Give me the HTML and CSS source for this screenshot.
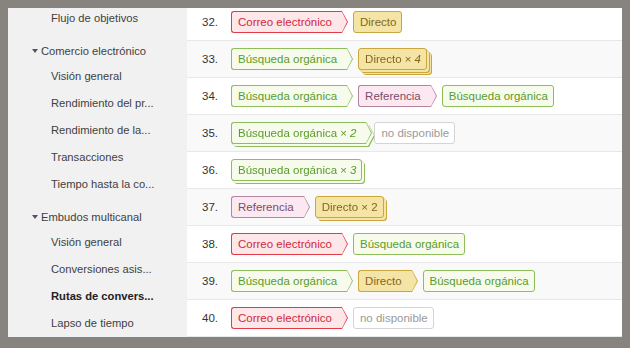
FILE: index.html
```html
<!DOCTYPE html>
<html lang="es">
<head>
    <meta charset="UTF-8">
    <meta name="viewport" content="width=device-width, initial-scale=1.0">
    <title>Rutas de conversión principales</title>
    <link rel="stylesheet" href="styles.css">
</head>
<body>
    <div class="panel">
        <div class="sidebar">
            <div class="nav-item first">Flujo de objetivos</div>

            <div class="nav-group"><span class="caret"></span>Comercio electrónico</div>
            <div class="nav-item">Visión general</div>
            <div class="nav-item">Rendimiento del pr...</div>
            <div class="nav-item">Rendimiento de la...</div>
            <div class="nav-item">Transacciones</div>
            <div class="nav-item">Tiempo hasta la co...</div>

            <div class="nav-group"><span class="caret"></span>Embudos multicanal</div>
            <div class="nav-item">Visión general</div>
            <div class="nav-item">Conversiones asis...</div>
            <div class="nav-item active">Rutas de convers...</div>
            <div class="nav-item">Lapso de tiempo</div>
        </div>

        <div class="main">
            <div class="paths">
                <div class="row">
                    <span class="num">32.</span>
                    <div class="path">
                        <span class="badge red arrow">Correo electrónico</span>
                        <span class="badge yellow">Directo</span>
                    </div>
                </div>
                <div class="row odd">
                    <span class="num">33.</span>
                    <div class="path">
                        <span class="badge green arrow">Búsqueda orgánica</span>
                        <span class="badge yellow stack-2">Directo <i>× 4</i></span>
                    </div>
                </div>
                <div class="row">
                    <span class="num">34.</span>
                    <div class="path">
                        <span class="badge green arrow">Búsqueda orgánica</span>
                        <span class="badge pink arrow">Referencia</span>
                        <span class="badge green">Búsqueda orgánica</span>
                    </div>
                </div>
                <div class="row odd">
                    <span class="num">35.</span>
                    <div class="path">
                        <span class="badge green arrow stack">Búsqueda orgánica <i>× 2</i></span>
                        <span class="badge gray">no disponible</span>
                    </div>
                </div>
                <div class="row">
                    <span class="num">36.</span>
                    <div class="path">
                        <span class="badge green stack">Búsqueda orgánica <i>× 3</i></span>
                    </div>
                </div>
                <div class="row odd">
                    <span class="num">37.</span>
                    <div class="path">
                        <span class="badge pink arrow">Referencia</span>
                        <span class="badge yellow stack">Directo × 2</span>
                    </div>
                </div>
                <div class="row">
                    <span class="num">38.</span>
                    <div class="path">
                        <span class="badge red arrow">Correo electrónico</span>
                        <span class="badge green">Búsqueda orgánica</span>
                    </div>
                </div>
                <div class="row odd">
                    <span class="num">39.</span>
                    <div class="path">
                        <span class="badge green arrow">Búsqueda orgánica</span>
                        <span class="badge yellow arrow">Directo</span>
                        <span class="badge green">Búsqueda orgánica</span>
                    </div>
                </div>
                <div class="row">
                    <span class="num">40.</span>
                    <div class="path">
                        <span class="badge red arrow">Correo electrónico</span>
                        <span class="badge gray">no disponible</span>
                    </div>
                </div>
            </div>
        </div>
    </div>
</body>
</html>
```

FILE: styles.css
```css
/* Frame */
html, body {
    height: 100%;
}

body {
    margin: 0;
    padding: 8px 8px 11px 8px;
    box-sizing: border-box;
    background-color: #87837e;
    font-family: "Liberation Sans", Arial, sans-serif;
    font-size: 11px;
    color: #333;
}

.panel {
    display: flex;
    height: 100%;
    overflow: hidden;
    background-color: #fff;
}

/* Sidebar */
.sidebar {
    width: 179px;
    flex-shrink: 0;
    background-color: #f1f1f1;
    color: #3f3f3f;
    font-size: 11.2px;
}

.nav-item {
    height: 27px;
    line-height: 27px;
    padding-left: 43px;
    white-space: nowrap;
}

.nav-item.first {
    margin-top: -3px;
}

.nav-item.active {
    font-weight: bold;
    color: #222;
}

.nav-group {
    display: flex;
    align-items: center;
    height: 25px;
    margin-top: 6px;
    padding-left: 24px;
    white-space: nowrap;
}

.caret {
    width: 0;
    height: 0;
    border-left: 3px solid transparent;
    border-right: 3px solid transparent;
    border-top: 4px solid #555;
    margin-right: 3px;
}

/* Path rows */
.main {
    flex: 1;
    overflow: hidden;
}

.paths {
    margin-top: -4px;
}

.row {
    display: flex;
    align-items: center;
    height: 36px;
    border-bottom: 1px solid #e8e8e8;
}

.row.odd {
    background-color: #f9f9f9;
}

.num {
    width: 31px;
    margin-right: 13px;
    text-align: right;
    font-size: 11.5px;
    color: #333;
}

.path {
    display: flex;
    align-items: center;
    gap: 5px;
}

/* Channel badges */
.badge {
    position: relative;
    display: inline-flex;
    align-items: center;
    height: 22px;
    box-sizing: border-box;
    padding: 0 5px 0 6px;
    border: 1px solid;
    border-radius: 3px;
    font-size: 11.5px;
    white-space: nowrap;
    --bg: #fff;
    --line: #ccc;
    background-color: var(--bg);
    border-color: var(--line);
}

.badge i {
    margin-left: 3px;
}

.badge.arrow {
    padding-right: 10px;
    margin-right: 6px;
    border-right: none;
    border-radius: 3px 0 0 3px;
}

.badge.arrow::before,
.badge.arrow::after {
    content: "";
    position: absolute;
    left: 100%;
    width: 0;
    height: 0;
}

.badge.arrow::before {
    top: -1px;
    border-top: 11px solid transparent;
    border-bottom: 11px solid transparent;
    border-left: 6px solid var(--line);
}

.badge.arrow::after {
    top: 0;
    border-top: 10px solid transparent;
    border-bottom: 10px solid transparent;
    border-left: 5px solid var(--bg);
}

.badge.stack {
    filter: drop-shadow(2px 2px 0 var(--bg)) drop-shadow(1px 1px 0 var(--line));
    margin-right: 3px;
}

.badge.stack-2 {
    filter: drop-shadow(2px 2px 0 var(--bg)) drop-shadow(1px 1px 0 var(--line))
            drop-shadow(1px 1px 0 var(--bg)) drop-shadow(1px 1px 0 var(--line));
    margin-right: 5px;
}

.red {
    --bg: #fde7e9;
    --line: #e13b47;
    color: #d1283a;
}

.green {
    --bg: #f6fbec;
    --line: #8dbe5a;
    color: #5a9b2b;
}

.yellow {
    --bg: #f4e4a6;
    --line: #c9a73d;
    color: #86661a;
}

.pink {
    --bg: #fbe8f1;
    --line: #b5849f;
    color: #7b4c6b;
}

.gray {
    --bg: #fff;
    --line: #d4d4d4;
    color: #9a9a9a;
}
```
